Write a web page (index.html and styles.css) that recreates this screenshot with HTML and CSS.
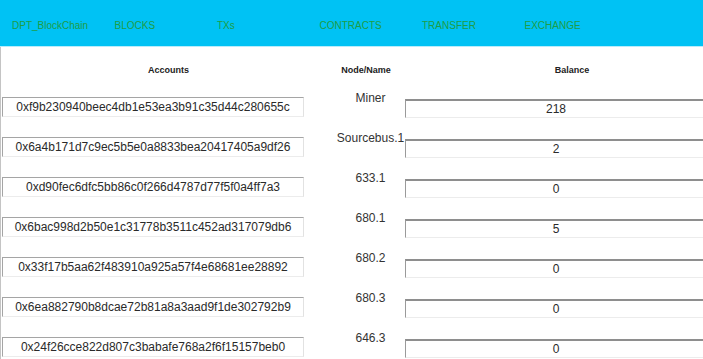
FILE: index.html
```html
<!DOCTYPE html>
<html>
<head>
<meta charset="utf-8">
<title>DPT_BlockChain</title>
<link rel="stylesheet" href="styles.css">
</head>
<body>
<div class="topbar">
  <span class="nav-item">DPT_BlockChain</span>
  <span class="nav-item">BLOCKS</span>
  <span class="nav-item">TXs</span>
  <span class="nav-item">CONTRACTS</span>
  <span class="nav-item">TRANSFER</span>
  <span class="nav-item">EXCHANGE</span>
</div>
<div class="main">
  <div class="head-row">
    <div class="h-acc">Accounts</div>
    <div class="h-node">Node/Name</div>
    <div class="h-bal">Balance</div>
  </div>
  <div class="row">
    <div class="acc">0xf9b230940beec4db1e53ea3b91c35d44c280655c</div>
    <div class="node">Miner</div>
    <div class="bal">218</div>
  </div>
  <div class="row">
    <div class="acc">0x6a4b171d7c9ec5b5e0a8833bea20417405a9df26</div>
    <div class="node">Sourcebus.1</div>
    <div class="bal">2</div>
  </div>
  <div class="row">
    <div class="acc">0xd90fec6dfc5bb86c0f266d4787d77f5f0a4ff7a3</div>
    <div class="node">633.1</div>
    <div class="bal">0</div>
  </div>
  <div class="row">
    <div class="acc">0x6bac998d2b50e1c31778b3511c452ad317079db6</div>
    <div class="node">680.1</div>
    <div class="bal">5</div>
  </div>
  <div class="row">
    <div class="acc">0x33f17b5aa62f483910a925a57f4e68681ee28892</div>
    <div class="node">680.2</div>
    <div class="bal">0</div>
  </div>
  <div class="row">
    <div class="acc">0x6ea882790b8dcae72b81a8a3aad9f1de302792b9</div>
    <div class="node">680.3</div>
    <div class="bal">0</div>
  </div>
  <div class="row">
    <div class="acc">0x24f26cce822d807c3babafe768a2f6f15157beb0</div>
    <div class="node">646.3</div>
    <div class="bal">0</div>
  </div>
</div>
</body>
</html>
```
FILE: styles.css
```css
html, body {
  margin: 0;
  padding: 0;
  background: #ffffff;
  overflow: hidden;
}
body {
  font-family: "Liberation Sans", Arial, sans-serif;
  color: #333333;
}
.topbar {
  height: 46px;
  background: #00c2f4;
  display: flex;
  align-items: center;
  padding-left: 12px;
  border-bottom: 1px solid #b9ecfb;
}
.nav-item {
  flex: 0 0 102.5px;
  font-size: 10px;
  color: #1f9d45;
  white-space: nowrap;
  padding-top: 5px;
}
.main {
  border-left: 1px solid #c4c4c4;
  overflow: hidden;
}
.head-row {
  height: 44px;
  display: flex;
  align-items: center;
  padding-top: 2px;
  box-sizing: border-box;
  font-size: 9px;
  font-weight: bold;
  color: #222222;
}
.h-acc {
  flex: 0 0 335px;
  text-align: center;
}
.h-node {
  flex: 0 0 60px;
  text-align: center;
}
.h-bal {
  flex: 0 0 307px;
  padding-left: 45px;
  box-sizing: border-box;
  text-align: center;
}
.row {
  height: 40px;
  display: flex;
  align-items: flex-start;
}
.acc {
  flex: 0 0 302px;
  margin-top: 6px;
  margin-left: 1px;
  height: 20px;
  box-sizing: border-box;
  border: 1px solid;
  border-color: #a5a5a5 #e2e2e2 #ececec #a5a5a5;
  font-size: 12px;
  line-height: 18px;
  text-align: center;
  color: #2a2a2a;
  white-space: nowrap;
}
.node {
  flex: 0 0 101px;
  padding-left: 32px;
  box-sizing: border-box;
  font-size: 12px;
  line-height: 14px;
  text-align: center;
  color: #333333;
  white-space: nowrap;
}
.bal {
  flex: 0 0 302px;
  margin-top: 8px;
  height: 19px;
  box-sizing: border-box;
  border-top: 2px solid #8e8e8e;
  border-left: 1px solid #9a9a9a;
  border-right: 1px solid #e2e2e2;
  border-bottom: 1px solid #ececec;
  font-size: 12px;
  line-height: 16px;
  text-align: center;
  color: #2a2a2a;
}
```
